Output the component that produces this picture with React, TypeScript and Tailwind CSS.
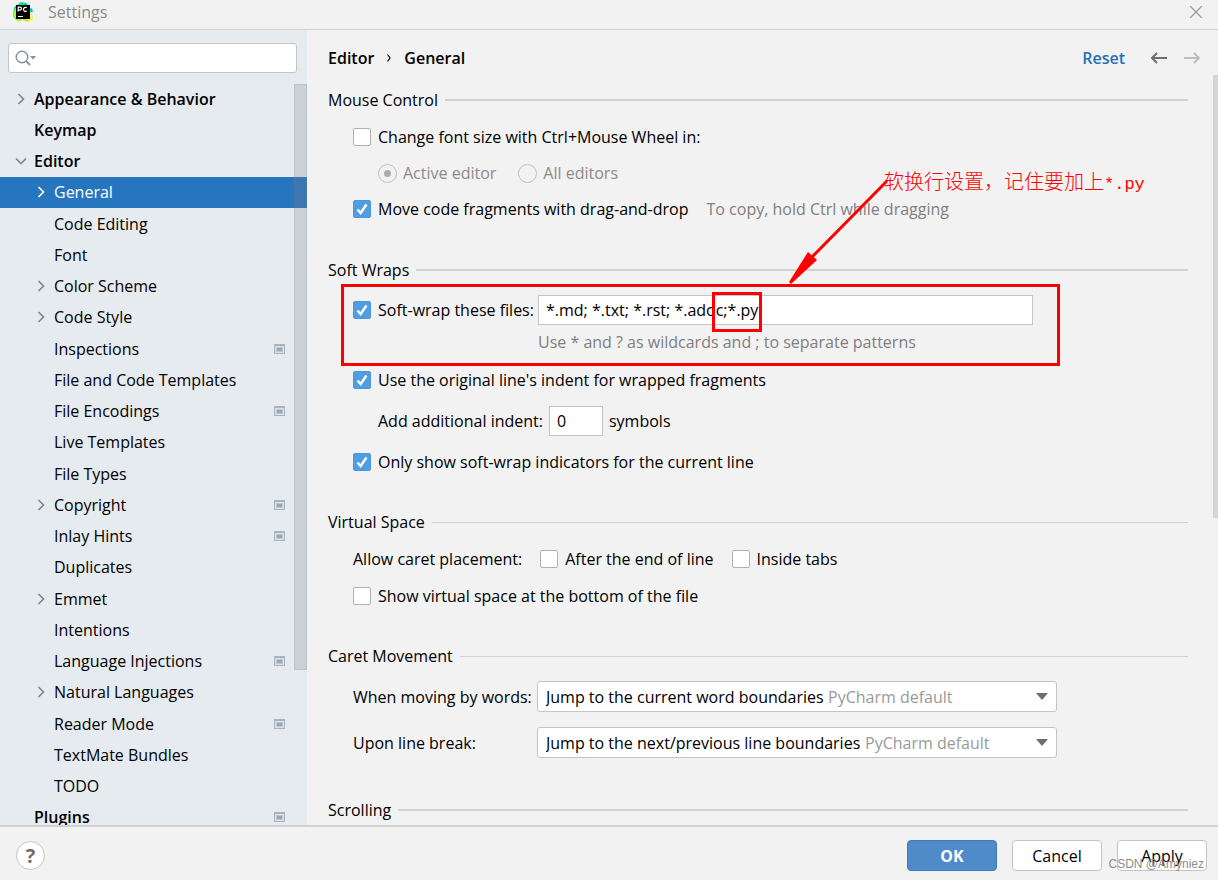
import React, { ReactNode } from "react";

type NavItem = {
  label: string;
  level: 0 | 1;
  state?: "open" | "closed";
  project?: boolean;
  selected?: boolean;
};

const NAV: NavItem[] = [
  { label: "Appearance & Behavior", level: 0, state: "closed" },
  { label: "Keymap", level: 0 },
  { label: "Editor", level: 0, state: "open" },
  { label: "General", level: 1, state: "closed", selected: true },
  { label: "Code Editing", level: 1 },
  { label: "Font", level: 1 },
  { label: "Color Scheme", level: 1, state: "closed" },
  { label: "Code Style", level: 1, state: "closed" },
  { label: "Inspections", level: 1, project: true },
  { label: "File and Code Templates", level: 1 },
  { label: "File Encodings", level: 1, project: true },
  { label: "Live Templates", level: 1 },
  { label: "File Types", level: 1 },
  { label: "Copyright", level: 1, state: "closed", project: true },
  { label: "Inlay Hints", level: 1, project: true },
  { label: "Duplicates", level: 1 },
  { label: "Emmet", level: 1, state: "closed" },
  { label: "Intentions", level: 1 },
  { label: "Language Injections", level: 1, project: true },
  { label: "Natural Languages", level: 1, state: "closed" },
  { label: "Reader Mode", level: 1, project: true },
  { label: "TextMate Bundles", level: 1 },
  { label: "TODO", level: 1 },
  { label: "Plugins", level: 0, project: true },
];

function Logo() {
  return (
    <svg width="20" height="20" viewBox="0 0 20 20" aria-hidden="true">
      <path d="M1 5 L8 0 L14 1 L12 10 L3 18 L0 14 Z" fill="#21d789" />
      <path d="M12 1 L16 3 L16 7 L19 6 L20 10 L16 11 L10 8 Z" fill="#07c3f2" />
      <path d="M0 13 L3 5 L9 12 L19 12 L20 17 L15 20 L9 18 L5 20 Z" fill="#b8f135" />
      <path d="M14 11 L18 10 L20 17 L15 19 Z" fill="#fcf84a" />
      <rect x="3" y="3" width="14" height="14" fill="#000" />
      <path d="M5.2 9.5 V5.2 H7 a1.4 1.4 0 0 1 0 2.9 H5.2 M13.8 5.9 a2 2 0 1 0 0 3" fill="none" stroke="#fff" strokeWidth="1.2" />
      <rect x="5" y="14" width="5" height="1" fill="#fff" />
    </svg>
  );
}

function Chevron({ open, light }: { open: boolean; light?: boolean }) {
  return (
    <svg
      width="12"
      height="12"
      viewBox="0 0 12 12"
      fill="none"
      strokeWidth="1.6"
      className={light ? "stroke-white" : "stroke-[#7f8487]"}
      aria-hidden="true"
    >
      <path d={open ? "M1 3.5 L6 8.5 L11 3.5" : "M3.5 1 L8.5 6 L3.5 11"} />
    </svg>
  );
}

function ProjectIcon() {
  return (
    <svg width="11" height="10" viewBox="0 0 11 10" aria-hidden="true" className="shrink-0">
      <rect width="11" height="10" fill="#a8b4bd" />
      <rect x="1" y="2" width="9" height="7" fill="#dbe2e8" />
      <rect x="2" y="3" width="7" height="5" fill="#bcc7cf" />
      <rect x="3" y="4" width="5" height="3" fill="#9aa7b0" />
    </svg>
  );
}

function NavRow({ item }: { item: NavItem }) {
  return (
    <li className="flex min-h-6">
      <a
        href="#"
        aria-current={item.selected ? "page" : undefined}
        className={[
          "flex flex-1 items-center pr-[22px]",
          item.level === 0 ? "pl-[15px] font-semibold" : "pl-[35px]",
          item.selected ? "bg-[#2675bf] text-white" : "",
        ].join(" ")}
      >
        <span className="w-[19px] shrink-0">
          {item.state && <Chevron open={item.state === "open"} light={item.selected} />}
        </span>
        <span className="flex-1 whitespace-nowrap">{item.label}</span>
        {item.project && <ProjectIcon />}
      </a>
    </li>
  );
}

function Check({ label, checked }: { label: string; checked?: boolean }) {
  return (
    <label className="flex items-center gap-[7px] whitespace-nowrap">
      <span className="relative flex shrink-0">
        <input
          type="checkbox"
          defaultChecked={checked}
          className="peer size-[18px] appearance-none rounded-[2px] border border-[#b0b0b0] bg-white checked:border-[#4a97dc] checked:bg-[#4f9ee3]"
        />
        <svg
          width="18"
          height="18"
          viewBox="0 0 18 18"
          fill="none"
          className="pointer-events-none absolute inset-0 hidden stroke-white stroke-[2.4] peer-checked:block"
          aria-hidden="true"
        >
          <path d="M4.5 9.5 L7.6 13 L13.5 4.5" />
        </svg>
      </span>
      {label}
    </label>
  );
}

function Radio({ label, checked }: { label: string; checked?: boolean }) {
  return (
    <label className="flex items-center gap-[6px] text-[#8c8c8c]">
      <span className="relative flex shrink-0">
        <input
          type="radio"
          name="zoom-scope"
          disabled
          defaultChecked={checked}
          className="peer size-[19px] appearance-none rounded-full border border-[#c0c0c0] bg-[#f2f2f2]"
        />
        <span className="pointer-events-none absolute inset-[6px] hidden rounded-full bg-[#ababab] peer-checked:block" />
      </span>
      {label}
    </label>
  );
}

function Section({ title, thick, children }: { title: string; thick?: boolean; children?: ReactNode }) {
  return (
    <section className="flex flex-col gap-[13px]">
      <div className="flex items-center gap-[7px]">
        <h2>{title}</h2>
        <div className={thick ? "h-[2px] flex-1 bg-[#d1d1d1]" : "h-px flex-1 bg-[#d1d1d1]"} />
      </div>
      {children}
    </section>
  );
}

function Combo({ id, label, value }: { id: string; label: string; value: string }) {
  return (
    <div className="flex items-center">
      <label htmlFor={id} className="w-[184px] shrink-0">
        {label}
      </label>
      <div className="flex h-[31px] w-[520px] items-center rounded-[3px] border border-[#c4c4c4] bg-white px-2">
        <select id={id} className="appearance-none bg-white">
          <option>{value}</option>
        </select>
        <span className="ml-1 flex-1 text-[#999999]">PyCharm default</span>
        <svg width="12" height="7" viewBox="0 0 12 7" className="fill-[#6e6e6e]" aria-hidden="true">
          <path d="M0 0 H12 L6 7 Z" />
        </svg>
      </div>
    </div>
  );
}

export default function App() {
  return (
    <div className="flex h-screen flex-col overflow-hidden bg-[#f2f2f2] font-['Open_Sans',sans-serif] text-base leading-6 text-black">
      <header className="flex h-[30px] shrink-0 items-center border-b border-[#d1d1d1] pr-4 pb-[5px] pl-[13px]">
        <Logo />
        <h1 className="ml-[15px] flex-1 text-[#8a8a8a]">Settings</h1>
        <button type="button" aria-label="Close">
          <svg width="12" height="12" viewBox="0 0 12 12" fill="none" className="stroke-[#909090] stroke-[1.2]">
            <path d="M0 0 L12 12 M12 0 L0 12" />
          </svg>
        </button>
      </header>

      <div className="flex min-h-0 flex-1">
        <aside className="relative flex w-[307px] shrink-0 flex-col overflow-hidden bg-[#e6ebf0] pt-[13px]">
          <div className="relative mr-[10px] ml-2 flex">
            <input
              type="text"
              aria-label="Search settings"
              className="h-[30px] w-full rounded-[3px] border border-[#c4c4c4] bg-white pr-2 pl-9"
            />
            <svg width="22" height="16" viewBox="0 0 22 16" fill="none" className="pointer-events-none absolute top-[7px] left-[7px]" aria-hidden="true">
              <circle cx="7" cy="7" r="5.8" stroke="#87939a" strokeWidth="1.4" />
              <path d="M11 11 L15 15" stroke="#87939a" strokeWidth="1.8" />
              <path d="M15 6 H21 L18 9.5 Z" fill="#87939a" />
            </svg>
          </div>
          <nav className="mt-[10px] -mb-2 flex flex-1 flex-col">
            <ul className="grid flex-1 auto-rows-fr">
              {NAV.map((item) => (
                <NavRow key={item.label} item={item} />
              ))}
            </ul>
          </nav>
          <div className="absolute top-[54px] right-0 h-[586px] w-[13px] border border-[#808080]/15 bg-[#808080]/25" />
        </aside>

        <main className="relative flex-1 overflow-hidden pr-[30px] pl-[21px]">
          <div className="flex h-14 items-center">
            <div className="flex flex-1 items-center gap-[13px] font-semibold">
              <a href="#">Editor</a>
              <svg width="4" height="8" viewBox="0 0 4 8" fill="none" className="stroke-black stroke-[1.2]" aria-hidden="true">
                <path d="M0.5 0.5 L3 4 L0.5 7.5" />
              </svg>
              <span>General</span>
            </div>
            <button type="button" className="font-semibold text-[#2470b3]">
              Reset
            </button>
            <div className="-mr-[13px] ml-[25px] flex gap-[17px]">
              <button type="button" aria-label="Back">
                <svg width="17" height="12" viewBox="0 0 17 12" fill="none" className="stroke-[#6e6e6e] stroke-2">
                  <path d="M17 6 H2 M7 1 L2 6 L7 11" />
                </svg>
              </button>
              <button type="button" aria-label="Forward" disabled>
                <svg width="17" height="12" viewBox="0 0 17 12" fill="none" className="stroke-[#bdbdbd] stroke-2">
                  <path d="M0 6 H15 M10 1 L15 6 L10 11" />
                </svg>
              </button>
            </div>
          </div>

          <div className="mt-[2px] flex flex-col gap-9">
            <Section title="Mouse Control" thick>
              <div className="flex flex-col gap-3 pb-px pl-[25px]">
                <Check label="Change font size with Ctrl+Mouse Wheel in:" />
                <div className="flex gap-[22px] pl-[25px]">
                  <Radio label="Active editor" checked />
                  <Radio label="All editors" />
                </div>
                <div className="flex items-center gap-[18px]">
                  <Check label="Move code fragments with drag-and-drop" checked />
                  <span className="text-[#808080]">To copy, hold Ctrl while dragging</span>
                </div>
              </div>
            </Section>

            <Section title="Soft Wraps" thick>
              <div className="relative flex flex-col gap-[14px] pl-[25px]">
                <div className="flex flex-col gap-[5px]">
                  <div className="flex items-center">
                    <div className="w-[185px] shrink-0">
                      <Check label="Soft-wrap these files:" checked />
                    </div>
                    <div className="relative flex w-[495px]">
                      <input
                        type="text"
                        aria-label="Soft-wrap file patterns"
                        defaultValue="*.md; *.txt; *.rst; *.adoc;*.py"
                        className="h-[30px] w-full border border-[#c4c4c4] bg-white px-[7px]"
                      />
                      <div className="pointer-events-none absolute -top-[3px] left-[174px] h-10 w-[50px] border-3 border-[#ff0000]" />
                    </div>
                  </div>
                  <p className="pl-[185px] text-[#808080]">Use * and ? as wildcards and ; to separate patterns</p>
                </div>
                <Check label="Use the original line's indent for wrapped fragments" checked />
                <div className="flex items-center gap-[6px] pl-[25px]">
                  <label htmlFor="extra-indent">Add additional indent:</label>
                  <input
                    id="extra-indent"
                    type="text"
                    defaultValue="0"
                    className="h-[30px] w-[54px] border border-[#c4c4c4] bg-white px-[7px]"
                  />
                  <span>symbols</span>
                </div>
                <Check label="Only show soft-wrap indicators for the current line" checked />

                <div className="pointer-events-none absolute -top-[11px] left-[13px] h-[82px] w-[719px] border-3 border-[#ff0000]" />
                <svg
                  width="100"
                  height="104"
                  viewBox="0 0 100 104"
                  className="pointer-events-none absolute -top-[115px] left-[461px]"
                  aria-hidden="true"
                >
                  <path d="M98 1 L22 78" stroke="#ff0000" strokeWidth="3" fill="none" />
                  <path d="M0 102 L19 72 L28 80 L2 104 Z" fill="#ff0000" />
                </svg>
                <p className="pointer-events-none absolute -top-[126px] left-[556px] font-['Noto_Sans_CJK_SC',sans-serif] text-xl leading-6 font-light whitespace-nowrap text-[#ff0000]">
                  软换行设置，记住要加上<span className="font-['Liberation_Mono',monospace] text-[17px]">*.py</span>
                </p>
              </div>
            </Section>

            <Section title="Virtual Space">
              <div className="flex flex-col gap-[13px] pl-[25px]">
                <div className="flex items-center gap-[18px]">
                  <span>Allow caret placement:</span>
                  <Check label="After the end of line" />
                  <Check label="Inside tabs" />
                </div>
                <Check label="Show virtual space at the bottom of the file" />
              </div>
            </Section>

            <Section title="Caret Movement">
              <div className="flex flex-col gap-[15px] pb-1 pl-[25px]">
                <Combo id="by-words" label="When moving by words:" value="Jump to the current word boundaries" />
                <Combo id="line-break" label="Upon line break:" value="Jump to the next/previous line boundaries" />
              </div>
            </Section>

            <Section title="Scrolling" thick />
          </div>

          <div className="absolute top-[45px] right-0 h-[443px] w-[5px] bg-[#d6d6d6]" />
        </main>
      </div>

      <footer className="relative flex h-[55px] shrink-0 items-start gap-[15px] border-t-2 border-[#d1d1d1] pt-[13px] pr-[11px] pl-4">
        <button
          type="button"
          aria-label="Help"
          className="mt-px flex size-[29px] items-center justify-center rounded-full border border-[#c4c4c4] bg-white text-xl font-bold text-[#6e6e6e]"
        >
          ?
        </button>
        <div className="flex-1" />
        <button type="button" className="h-[31px] w-[90px] rounded-[4px] border border-[#4079b8] bg-[#4f8bc9] font-bold text-white">
          OK
        </button>
        <button type="button" className="h-[31px] w-[90px] rounded-[4px] border border-[#c4c4c4] bg-white">
          Cancel
        </button>
        <button type="button" className="h-[31px] w-[90px] rounded-[4px] border border-[#c4c4c4] bg-white">
          Apply
        </button>
        <span className="pointer-events-none absolute right-[14px] bottom-[6px] font-['Liberation_Sans',sans-serif] text-xs leading-5 text-[#8c8c8c]">
          CSDN @Amyniez
        </span>
      </footer>
    </div>
  );
}
